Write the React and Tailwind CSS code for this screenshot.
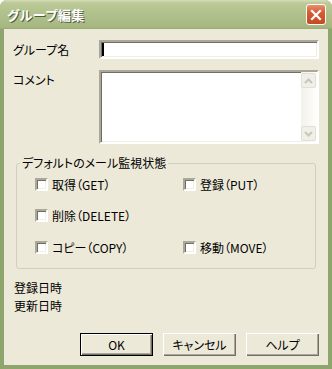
import React from 'react';

const sunken = 'border-2 border-t-[#ACA899] border-l-[#ACA899] border-b-white border-r-white shadow-[inset_1px_1px_0_#716F64,inset_-1px_-1px_0_#F1EFE2]';

function Check({ label }) {
  return (
    <div className="flex items-center h-[13px]">
      <span className={`w-[13px] h-[13px] bg-white ${sunken}`} />
      <span className="ml-[4px] leading-[13px]">{label}</span>
    </div>
  );
}

function Btn({ children, def }) {
  return (
    <button
      className={`w-[73px] h-[23px] flex items-center justify-center bg-[#ECE9D8] leading-none ${
        def
          ? 'border border-black shadow-[inset_1px_1px_0_#fff,inset_-1px_-1px_0_#716F64,inset_-2px_-2px_0_#ACA899]'
          : 'shadow-[inset_1px_1px_0_#fff,inset_-1px_-1px_0_#716F64,inset_-2px_-2px_0_#ACA899]'
      }`}
    >
      {children}
    </button>
  );
}

export default function App() {
  return (
    <div className="w-[332px] h-[369px] bg-[#8FA56E] rounded-t-[7px] flex flex-col text-[12px] text-black font-['Noto_Sans_CJK_JP',sans-serif] [font-feature-settings:'palt']">
      {/* Title bar */}
      <div className="h-[29px] rounded-t-[7px] bg-[linear-gradient(#D6DEB8_0px,#BCC998_3px,#B2C28C_12px,#A6B781_27px,#98AC74_29px)] flex items-center pl-[7px] pr-[6px]">
        <span className="font-bold text-[13px] text-white [text-shadow:1px_1px_0_#4f5a3a] tracking-[0.5px]">グループ編集</span>
        <div className="ml-auto w-[20px] h-[21px] rounded-[3px] border border-white bg-[linear-gradient(#E7906E,#D65B33_40%,#C64A22)] flex items-center justify-center">
          <svg width="12" height="12" viewBox="0 0 12 12">
            <path d="M2 2L10 10M10 2L2 10" stroke="white" strokeWidth="2.2" strokeLinecap="square" />
          </svg>
        </div>
      </div>

      {/* Client area */}
      <div className="mx-[4px] mb-[4px] flex-1 bg-[#ECE9D8] flex flex-col">
        {/* Group name */}
        <div className="flex items-center mt-[11px]">
          <span className="w-[95px] pl-[9px]">グループ名</span>
          <div className={`w-[220px] h-[19px] bg-white ${sunken} flex items-center pl-[1px]`}>
            <span className="w-[2px] h-[13px] bg-black" />
          </div>
        </div>

        {/* Comment */}
        <div className="flex items-start mt-[11px]">
          <span className="w-[95px] pl-[9px] mt-[3px] leading-[14px]">コメント</span>
          <div className={`w-[220px] h-[74px] bg-white ${sunken} flex justify-end`}>
            <div className="w-[16px] h-full bg-[linear-gradient(90deg,#F3F1EA,#FEFEFB)] flex flex-col justify-between py-[1px] pr-[1px]">
              <div className="w-[15px] h-[15px] rounded-[2px] border border-[#E2E0D4] bg-[#F0EFE8] flex items-center justify-center">
                <svg width="9" height="6" viewBox="0 0 9 6">
                  <path d="M1 5L4.5 1.5L8 5" fill="none" stroke="#C9C7BA" strokeWidth="2" />
                </svg>
              </div>
              <div className="w-[15px] h-[15px] rounded-[2px] border border-[#E2E0D4] bg-[#F0EFE8] flex items-center justify-center">
                <svg width="9" height="6" viewBox="0 0 9 6">
                  <path d="M1 1L4.5 4.5L8 1" fill="none" stroke="#C9C7BA" strokeWidth="2" />
                </svg>
              </div>
            </div>
          </div>
        </div>

        {/* Group box */}
        <fieldset className="ml-[12px] w-[300px] mt-[12px] border border-[#D0D0BF] rounded-[3px] pb-[14px]">
          <legend className="ml-[3px] px-[2px] leading-[14px]">デフォルトのメール監視状態</legend>
          <div className="pl-[18px] flex flex-col">
            <div className="flex mt-[8px]">
              <div className="w-[148px]"><Check label="取得（GET）" /></div>
              <Check label="登録（PUT）" />
            </div>
            <div className="flex mt-[18px]">
              <Check label="削除（DELETE）" />
            </div>
            <div className="flex mt-[19px]">
              <div className="w-[148px]"><Check label="コピー（COPY）" /></div>
              <Check label="移動（MOVE）" />
            </div>
          </div>
        </fieldset>

        <div className="pl-[10px] mt-[12px] leading-[14px]">登録日時</div>
        <div className="pl-[10px] mt-[4px] leading-[14px]">更新日時</div>

        <div className="flex justify-end mt-[20px] pr-[9px] gap-[10px]">
          <Btn def>OK</Btn>
          <Btn>キャンセル</Btn>
          <Btn>ヘルプ</Btn>
        </div>
      </div>
    </div>
  );
}
